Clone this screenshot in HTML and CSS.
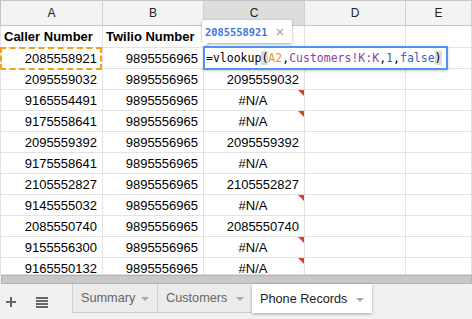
FILE: index.html
```html
<!DOCTYPE html>
<html lang="en">
<head>
    <meta charset="UTF-8">
    <title>Phone Records</title>
    <link rel="stylesheet" href="styles.css">
</head>
<body>

<div class="app">
    <div class="grid-wrap">
        <div class="sheet">
            <div class="cell col-head first">A</div>
            <div class="cell col-head">B</div>
            <div class="cell col-head active">C</div>
            <div class="cell col-head">D</div>
            <div class="cell col-head">E</div>

            <div class="cell title first">Caller Number</div>
            <div class="cell title">Twilio Number</div>
            <div class="cell title"></div>
            <div class="cell title"></div>
            <div class="cell title"></div>

            <div class="cell num first copy-ref">2085558921</div>
            <div class="cell num">9895556965</div>
            <div class="cell num"></div>
            <div class="cell"></div>
            <div class="cell"></div>

            <div class="cell num first">2095559032</div>
            <div class="cell num">9895556965</div>
            <div class="cell num">2095559032</div>
            <div class="cell"></div>
            <div class="cell"></div>

            <div class="cell num first">9165554491</div>
            <div class="cell num">9895556965</div>
            <div class="cell err note">#N/A</div>
            <div class="cell"></div>
            <div class="cell"></div>

            <div class="cell num first">9175558641</div>
            <div class="cell num">9895556965</div>
            <div class="cell err note">#N/A</div>
            <div class="cell"></div>
            <div class="cell"></div>

            <div class="cell num first">2095559392</div>
            <div class="cell num">9895556965</div>
            <div class="cell num">2095559392</div>
            <div class="cell"></div>
            <div class="cell"></div>

            <div class="cell num first">9175558641</div>
            <div class="cell num">9895556965</div>
            <div class="cell err">#N/A</div>
            <div class="cell"></div>
            <div class="cell"></div>

            <div class="cell num first">2105552827</div>
            <div class="cell num">9895556965</div>
            <div class="cell num">2105552827</div>
            <div class="cell"></div>
            <div class="cell"></div>

            <div class="cell num first">9145555032</div>
            <div class="cell num">9895556965</div>
            <div class="cell err note">#N/A</div>
            <div class="cell"></div>
            <div class="cell"></div>

            <div class="cell num first">2085550740</div>
            <div class="cell num">9895556965</div>
            <div class="cell num">2085550740</div>
            <div class="cell"></div>
            <div class="cell"></div>

            <div class="cell num first">9155556300</div>
            <div class="cell num">9895556965</div>
            <div class="cell err note">#N/A</div>
            <div class="cell"></div>
            <div class="cell"></div>

            <div class="cell num first">9165550132</div>
            <div class="cell num">9895556965</div>
            <div class="cell err note">#N/A</div>
            <div class="cell"></div>
            <div class="cell"></div>
        </div>

        <!-- value preview above the cell being edited -->
        <div class="preview">
            <span class="preview-value">2085558921</span>
            <span class="preview-close">&times;</span>
        </div>

        <!-- in-cell formula editor -->
        <div class="editor"><span class="paren">=vlookup<span class="hl">(</span></span><span class="ref">A2</span>,<span class="range">Customers!K:K</span>,<span class="lit">1</span>,<span class="lit">false</span><span class="hl">)</span></div>
    </div>

    <div class="scrollbar"><div class="thumb"></div></div>

    <div class="tabbar">
        <div class="tab-tools">
            <span class="add-sheet"></span>
            <span class="all-sheets"><i></i><i></i><i></i><i></i></span>
        </div>
        <div class="tab">Summary <span class="caret"></span></div>
        <div class="tab">Customers <span class="caret"></span></div>
        <div class="tab current">Phone Records <span class="caret"></span></div>
    </div>
</div>

</body>
</html>
```

FILE: styles.css
```css
body {
    margin: 0;
    font-family: 'Liberation Sans', Arial, sans-serif;
    background: #fff;
    overflow: hidden;
}
.app {
    width: 472px;
    height: 319px;
    display: flex;
    flex-direction: column;
}
.grid-wrap {
    position: relative;
    height: 274px;
    overflow: hidden;
}
.sheet {
    display: grid;
    grid-template-columns: 103px 101px 101px 101px 1fr;
    grid-auto-rows: 21px;
    grid-template-rows: 26px 22px;
}
.cell {
    box-sizing: border-box;
    border-right: 1px solid #e2e2e2;
    border-bottom: 1px solid #e2e2e2;
    font-size: 13px;
    color: #000;
    padding: 0 5px 0 3px;
    display: flex;
    align-items: center;
    white-space: nowrap;
    position: relative;
}
.cell.first {
    border-left: 1px solid #e2e2e2;
}
.col-head {
    background: #f3f3f3;
    border-top: 1px solid #c4c4c4;
    border-right-color: #d0d0d0;
    border-bottom-color: #c4c4c4;
    justify-content: center;
    font-size: 12px;
    color: #222;
    padding: 0;
}
.col-head.first {
    border-left-color: #c4c4c4;
}
.col-head.active {
    background: #dddddd;
}
.title {
    font-weight: bold;
}
.num {
    justify-content: flex-end;
}
.err {
    justify-content: center;
}
.note::after {
    content: "";
    position: absolute;
    top: 0;
    right: 0;
    border-top: 6px solid #d9402c;
    border-left: 6px solid transparent;
}
.copy-ref::before {
    content: "";
    position: absolute;
    left: -1px;
    top: -1px;
    right: 0;
    bottom: -2px;
    border: 2px dashed #f6a01a;
}
.preview {
    position: absolute;
    left: 202px;
    top: 20px;
    width: 90px;
    height: 23px;
    box-sizing: border-box;
    background: #fff;
    border-radius: 2px;
    box-shadow: 0 1px 3px rgba(0, 0, 0, 0.35);
    display: flex;
    align-items: center;
    padding-left: 3px;
    gap: 8px;
}
.preview::after {
    content: "";
    position: absolute;
    left: 0;
    bottom: -5px;
    border-top: 6px solid #fff;
    border-right: 8px solid transparent;
    filter: drop-shadow(0 1px 0 rgba(0, 0, 0, 0.2));
}
.preview-value {
    font-family: 'DejaVu Sans Mono', monospace;
    font-weight: bold;
    font-size: 10.4px;
    color: #3c78d8;
}
.preview-close {
    font-size: 15px;
    color: #a0a0a0;
    line-height: 1;
}
.editor {
    position: absolute;
    left: 203px;
    top: 46px;
    width: 245px;
    height: 24px;
    box-sizing: border-box;
    background: #fff;
    border: 2px solid #5491f5;
    box-shadow: 0 1px 3px rgba(0, 0, 0, 0.2);
    font-family: 'DejaVu Sans Mono', monospace;
    font-size: 11.5px;
    color: #000;
    padding-left: 1px;
    display: flex;
    align-items: center;
    white-space: pre;
}
.hl {
    background: #dcdcdc;
}
.ref {
    color: #f39416;
}
.range {
    color: #8e3ea6;
}
.lit {
    color: #2e64c9;
}
.scrollbar {
    height: 10px;
    background: #f1f1f1;
    border-top: 1px solid #e0e0e0;
    box-sizing: border-box;
    padding: 0 0 0 1px;
}
.thumb {
    height: 100%;
    background: #c8c8c8;
    border: 1px solid #b4b4b4;
    box-sizing: border-box;
}
.tabbar {
    flex: 1;
    background: #f1f1f1;
    display: flex;
    align-items: flex-start;
}
.tab-tools {
    width: 72px;
    height: 35px;
    display: flex;
    align-items: center;
}
.add-sheet {
    position: relative;
    width: 10px;
    height: 10px;
    margin-left: 6px;
    margin-top: 1px;
}
.add-sheet::before,
.add-sheet::after {
    content: "";
    position: absolute;
    background: #666;
}
.add-sheet::before {
    left: 0;
    top: 4px;
    width: 10px;
    height: 2px;
}
.add-sheet::after {
    left: 4px;
    top: 0;
    width: 2px;
    height: 10px;
}
.all-sheets {
    display: flex;
    flex-direction: column;
    gap: 1px;
    width: 12px;
    margin-left: 20px;
    margin-top: 1px;
}
.all-sheets i {
    display: block;
    height: 2px;
    background: #666;
}
.tab {
    box-sizing: border-box;
    height: 29px;
    padding: 0 8px 0 8px;
    display: flex;
    align-items: center;
    justify-content: space-between;
    font-size: 12.7px;
    color: #666;
    background: #ebebeb;
    border-left: 1px solid #d0d0d0;
    border-bottom: 1px solid #d0d0d0;
    width: 85px;
}
.tab:nth-child(3) {
    width: 95px;
}
.tab.current {
    width: 120px;
    background: #fff;
    color: #222;
    border: none;
    box-shadow: 0 1px 3px rgba(0, 0, 0, 0.3);
}
.caret {
    border-top: 4px solid #aaa;
    border-left: 4px solid transparent;
    border-right: 4px solid transparent;
    margin-top: 2px;
}
```
